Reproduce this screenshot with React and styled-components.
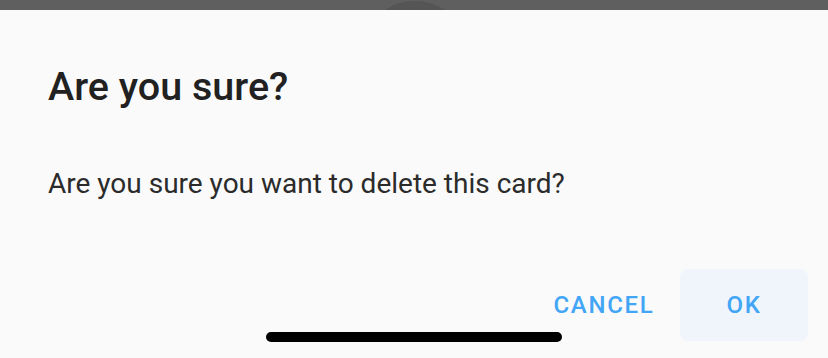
import React from "react";
import styled, { createGlobalStyle } from "styled-components";

const GlobalStyle = createGlobalStyle`
  html, body {
    margin: 0;
    padding: 0;
    background: #5f5f5f;
    font-family: Roboto, "Noto Sans", "Liberation Sans", sans-serif;
  }
`;

const Screen = styled.div`
  position: relative;
  width: 828px;
  height: 358px;
  overflow: hidden;
  display: flex;
  flex-direction: column;
  background: #5f5f5f;
`;

const Backdrop = styled.div`
  position: relative;
  height: 10px;
  flex-shrink: 0;
  overflow: hidden;
`;

const Avatar = styled.div`
  position: absolute;
  left: 360px;
  top: 1px;
  width: 110px;
  height: 110px;
  border-radius: 50%;
  background: #555555;
`;

const Dialog = styled.div`
  flex: 1;
  background: #fafafa;
  padding: 54px 20px 0 48px;
  display: flex;
  flex-direction: column;
`;

const Title = styled.h2`
  margin: 0;
  font-size: 39.5px;
  line-height: 46px;
  font-weight: 500;
  color: #212121;
`;

const Message = styled.p`
  margin: 58px 0 0;
  font-size: 28px;
  line-height: 32px;
  font-weight: 400;
  color: #2b2b2b;
`;

const Actions = styled.div`
  margin-top: 69px;
  display: flex;
  justify-content: flex-end;
  gap: 12px;
`;

const Button = styled.button`
  width: 128px;
  height: 72px;
  border: none;
  border-radius: 8px;
  background: ${(p) => (p.$focused ? "#eff5fa" : "transparent")};
  color: #42a5f5;
  font-family: Roboto, "Noto Sans", sans-serif;
  font-size: 24px;
  font-weight: 500;
  letter-spacing: 1.7px;
  text-transform: uppercase;
  padding: 0;
  cursor: pointer;
`;

const HomeIndicator = styled.div`
  position: absolute;
  left: 266px;
  bottom: 16px;
  width: 296px;
  height: 10px;
  border-radius: 5px;
  background: #000;
`;

export default function App() {
  return (
    <>
      <GlobalStyle />
      <Screen>
        <Backdrop>
          <Avatar />
        </Backdrop>
        <Dialog>
          <Title>Are you sure?</Title>
          <Message>Are you sure you want to delete this card?</Message>
          <Actions>
            <Button>Cancel</Button>
            <Button $focused>OK</Button>
          </Actions>
        </Dialog>
        <HomeIndicator />
      </Screen>
    </>
  );
}
